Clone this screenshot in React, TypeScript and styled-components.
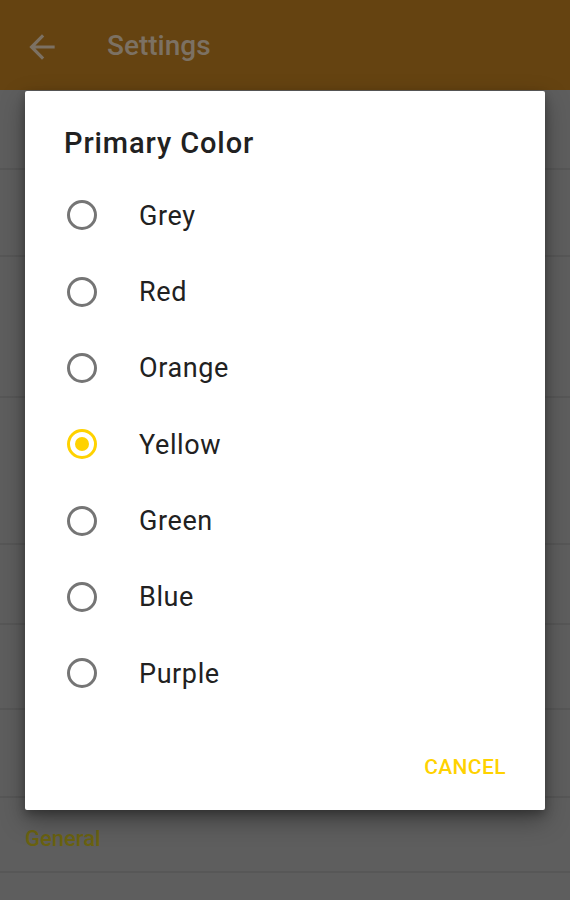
import React from "react";
import styled, { createGlobalStyle } from "styled-components";

const Global = createGlobalStyle`
  html, body { margin: 0; padding: 0; }
  body {
    width: 570px;
    height: 900px;
    overflow: hidden;
    background: #5e5e5e;
    font-family: Roboto, "Noto Sans", "Liberation Sans", sans-serif;
  }
`;

const Page = styled.div`
  position: relative;
  width: 570px;
  height: 900px;
  background: #5e5e5e;
  display: flex;
  flex-direction: column;
`;

const Toolbar = styled.header`
  height: 90px;
  flex: none;
  background: #654311;
  display: flex;
  align-items: center;
  padding-left: 23px;
  padding-top: 3px;
  gap: 46px;
  box-sizing: border-box;
`;

const ToolbarTitle = styled.div`
  font-size: 28px;
  font-weight: 500;
  color: #7c7163;
  padding-bottom: 2px;
`;

const Row = styled.div<{ $h: number }>`
  height: ${(p) => p.$h}px;
  flex: none;
  border-bottom: 2px solid #575757;
  box-sizing: border-box;
  display: flex;
  align-items: center;
  padding-left: 25px;
`;

const Category = styled.div`
  font-size: 22px;
  font-weight: 500;
  color: #6a6210;
  padding-top: 8px;
`;

const Overlay = styled.div`
  position: absolute;
  inset: 0;
  display: flex;
  align-items: center;
  justify-content: center;
`;

const Dialog = styled.div`
  width: 520px;
  height: 719px;
  background: #ffffff;
  border-radius: 2px;
  box-shadow: 0 10px 24px rgba(0, 0, 0, 0.35), 0 4px 8px rgba(0, 0, 0, 0.25);
  box-sizing: border-box;
  padding: 34px 0 19px 0;
  display: flex;
  flex-direction: column;
`;

const Title = styled.h2`
  margin: 0;
  padding-left: 39px;
  font-size: 29px;
  line-height: 36px;
  font-weight: 500;
  letter-spacing: 0.9px;
  color: #212121;
`;

const List = styled.div`
  margin-top: 16.6px;
  display: flex;
  flex-direction: column;
`;

const Option = styled.label`
  height: 76.33px;
  display: flex;
  align-items: center;
  padding-left: 42px;
  gap: 42px;
`;

const Radio = styled.span<{ $checked: boolean }>`
  width: 30px;
  height: 30px;
  box-sizing: border-box;
  border-radius: 50%;
  border: 3px solid ${(p) => (p.$checked ? "#ffd200" : "#757575")};
  display: flex;
  align-items: center;
  justify-content: center;
  flex: none;
  &::after {
    content: "";
    width: 14px;
    height: 14px;
    border-radius: 50%;
    background: #ffd200;
    display: ${(p) => (p.$checked ? "block" : "none")};
  }
`;

const OptionLabel = styled.span`
  font-size: 27px;
  letter-spacing: 0.6px;
  color: #212121;
  padding-top: 1px;
`;

const Actions = styled.div`
  margin-top: auto;
  height: 48px;
  display: flex;
  justify-content: flex-end;
  align-items: center;
  padding-right: 39px;
`;

const TextButton = styled.button`
  border: none;
  background: none;
  padding: 0;
  font-family: inherit;
  font-size: 21px;
  font-weight: 500;
  letter-spacing: 0.4px;
  color: #ffd200;
  text-transform: uppercase;
`;

const BackIcon = () => (
  <svg width="38" height="38" viewBox="0 0 24 24" aria-hidden>
    <path
      d="M20 11H7.83l5.59-5.59L12 4l-8 8 8 8 1.41-1.41L7.83 13H20v-2z"
      fill="#7c7163"
    />
  </svg>
);

const options = ["Grey", "Red", "Orange", "Yellow", "Green", "Blue", "Purple"];
const rows = [80, 87, 141, 147, 80, 85, 88];

export default function App() {
  return (
    <>
      <Global />
      <Page>
        <Toolbar>
          <BackIcon />
          <ToolbarTitle>Settings</ToolbarTitle>
        </Toolbar>
        {rows.map((h, i) => (
          <Row key={i} $h={h} />
        ))}
        <Row $h={75}>
          <Category>General</Category>
        </Row>
        <Overlay>
          <Dialog>
            <Title>Primary Color</Title>
            <List>
              {options.map((o) => (
                <Option key={o}>
                  <Radio $checked={o === "Yellow"} />
                  <OptionLabel>{o}</OptionLabel>
                </Option>
              ))}
            </List>
            <Actions>
              <TextButton>Cancel</TextButton>
            </Actions>
          </Dialog>
        </Overlay>
      </Page>
    </>
  );
}
